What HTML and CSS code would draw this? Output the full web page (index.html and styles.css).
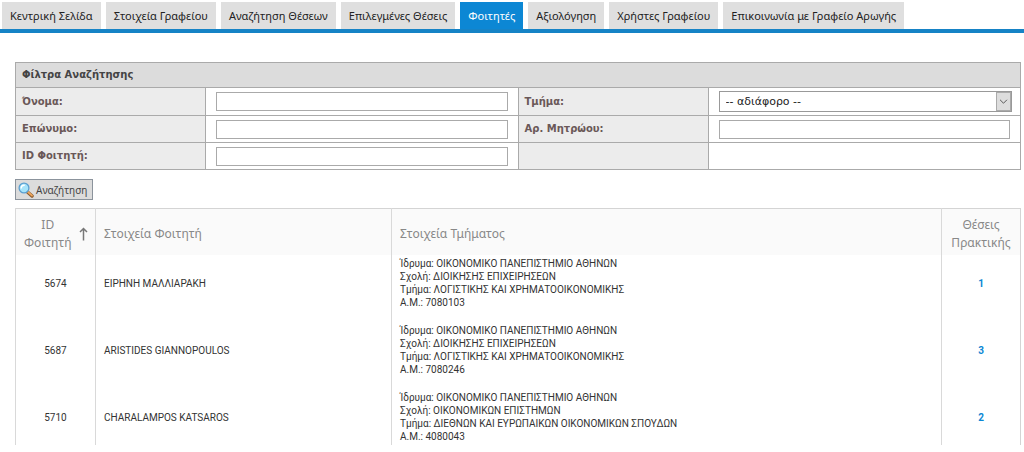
FILE: index.html
```html
<!DOCTYPE html>
<html lang="el">
<head>
<meta charset="utf-8">
<title>Φοιτητές</title>
<link rel="stylesheet" href="styles.css">
</head>
<body>
<nav class="tabs">
  <a class="tab" href="#">Κεντρική Σελίδα</a>
  <a class="tab" href="#">Στοιχεία Γραφείου</a>
  <a class="tab" href="#">Αναζήτηση Θέσεων</a>
  <a class="tab" href="#">Επιλεγμένες Θέσεις</a>
  <a class="tab active" href="#">Φοιτητές</a>
  <a class="tab" href="#">Αξιολόγηση</a>
  <a class="tab" href="#">Χρήστες Γραφείου</a>
  <a class="tab" href="#">Επικοινωνία με Γραφείο Αρωγής</a>
</nav>
<main class="content">
  <form>
    <table class="filters">
      <colgroup><col class="c-label"><col class="c-field"><col class="c-label"><col class="c-field"></colgroup>
      <thead><tr><th colspan="4">Φίλτρα Αναζήτησης</th></tr></thead>
      <tbody>
        <tr>
          <th><label for="first">Όνομα:</label></th>
          <td><input class="text" type="text" id="first"></td>
          <th><label for="dept">Τμήμα:</label></th>
          <td>
            <div class="select-box">
              <select id="dept"><option>-- αδιάφορο --</option></select>
              <svg class="caret" viewBox="0 0 15 19" aria-hidden="true"><path d="M3.500 7.500l4 4 4-4"/></svg>
            </div>
          </td>
        </tr>
        <tr>
          <th><label for="last">Επώνυμο:</label></th>
          <td><input class="text" type="text" id="last"></td>
          <th><label for="reg">Αρ. Μητρώου:</label></th>
          <td><input class="text" type="text" id="reg"></td>
        </tr>
        <tr>
          <th><label for="sid">ID Φοιτητή:</label></th>
          <td><input class="text" type="text" id="sid"></td>
          <th></th>
          <td></td>
        </tr>
      </tbody>
    </table>
    <button class="search" type="button">
      <svg class="glass" viewBox="0 0 16 16" aria-hidden="true">
        <path d="M9.500 10l4.500 4" stroke="#8a5a2c" stroke-width="3.400" stroke-linecap="round"/>
        <path d="M10 10l4 3.600" stroke="#f0a860" stroke-width="1.800" stroke-linecap="round"/>
        <circle cx="6" cy="6" r="4.900" fill="#a5e3fa" stroke="#5b9fd0" stroke-width="1.300"/>
        <path d="M3.200 6a3 3 0 0 1 3-2.800" fill="none" stroke="#fff" stroke-width="1.400" stroke-linecap="round"/>
      </svg>
      Αναζήτηση
    </button>
  </form>
  <table class="grid">
    <colgroup><col class="g-id"><col class="g-name"><col class="g-dept"><col class="g-count"></colgroup>
    <thead>
      <tr>
        <th class="mid"><div class="sort"><span>ID Φοιτητή</span><svg class="arrow" viewBox="0 0 9 14" aria-hidden="true"><path d="M4.500 13.500V1.500M1 5l3.500-3.500L8 5"/></svg></div></th>
        <th>Στοιχεία Φοιτητή</th>
        <th>Στοιχεία Τμήματος</th>
        <th class="mid">Θέσεις Πρακτικής</th>
      </tr>
    </thead>
    <tbody>
      <tr>
        <td class="mid">5674</td>
        <td>ΕΙΡΗΝΗ ΜΑΛΛΙΑΡΑΚΗ</td>
        <td>Ίδρυμα: ΟΙΚΟΝΟΜΙΚΟ ΠΑΝΕΠΙΣΤΗΜΙΟ ΑΘΗΝΩΝ<br>Σχολή: ΔΙΟΙΚΗΣΗΣ ΕΠΙΧΕΙΡΗΣΕΩΝ<br>Τμήμα: ΛΟΓΙΣΤΙΚΗΣ ΚΑΙ ΧΡΗΜΑΤΟΟΙΚΟΝΟΜΙΚΗΣ<br>Α.Μ.: 7080103</td>
        <td class="mid"><a class="count" href="#">1</a></td>
      </tr>
      <tr>
        <td class="mid">5687</td>
        <td>ARISTIDES GIANNOPOULOS</td>
        <td>Ίδρυμα: ΟΙΚΟΝΟΜΙΚΟ ΠΑΝΕΠΙΣΤΗΜΙΟ ΑΘΗΝΩΝ<br>Σχολή: ΔΙΟΙΚΗΣΗΣ ΕΠΙΧΕΙΡΗΣΕΩΝ<br>Τμήμα: ΛΟΓΙΣΤΙΚΗΣ ΚΑΙ ΧΡΗΜΑΤΟΟΙΚΟΝΟΜΙΚΗΣ<br>Α.Μ.: 7080246</td>
        <td class="mid"><a class="count" href="#">3</a></td>
      </tr>
      <tr>
        <td class="mid">5710</td>
        <td>CHARALAMPOS KATSAROS</td>
        <td>Ίδρυμα: ΟΙΚΟΝΟΜΙΚΟ ΠΑΝΕΠΙΣΤΗΜΙΟ ΑΘΗΝΩΝ<br>Σχολή: ΟΙΚΟΝΟΜΙΚΩΝ ΕΠΙΣΤΗΜΩΝ<br>Τμήμα: ΔΙΕΘΝΩΝ ΚΑΙ ΕΥΡΩΠΑΙΚΩΝ ΟΙΚΟΝΟΜΙΚΩΝ ΣΠΟΥΔΩΝ<br>Α.Μ.: 4080043</td>
        <td class="mid"><a class="count" href="#">2</a></td>
      </tr>
    </tbody>
  </table>
</main>
</body>
</html>
```
FILE: styles.css
```css
* { box-sizing: border-box; }
body { margin: 0; background: #fff; color: #333; font-family: "Noto Sans", "Open Sans", sans-serif; }
table { border-collapse: collapse; width: 100%; table-layout: fixed; }

.tabs { display: flex; gap: 5px; padding: 2px 2px 0; border-bottom: 4px solid #1683c6; font: 11px/27px "Noto Sans", sans-serif; }
.tab { padding: 0 8px; background: #dfdfdf; color: #222; text-decoration: none; white-space: nowrap; }
.tab.active { background: #0c87d4; color: #fff; }

.content { padding: 29px 3px 0 15px; }

.filters { font: bold 10px/14px "DejaVu Sans", sans-serif; color: #6a5858; }
.filters th, .filters td { height: 27px; border: 1px solid #aaa; text-align: left; }
.filters th { padding: 0 6px; background: #ececec; }
.filters thead th { height: 25px; background: #dcdcdc; color: #444; }
.filters td { padding: 0 8px 0 10px; }
.c-label { width: 190px; }
.text { display: block; width: calc(100% - 2px); height: 19px; padding: 0 6px; border: 1px solid #aaa; background: #fff; }
.select-box { position: relative; }
.select-box select { display: block; appearance: none; width: 100%; height: 21px; margin: 3px 0; padding: 0 22px 0 6px; border: 1px solid #999; border-radius: 0; background: #fff; color: #222; font: 11px "DejaVu Sans", sans-serif; }
.caret { position: absolute; top: 1px; right: 1px; width: 15px; height: 19px; background: #ddd; border: 1px solid #aaa; fill: none; stroke: #444; pointer-events: none; }

.search { display: flex; align-items: center; gap: 2px; height: 21px; margin: 9px 0 8px; padding: 0 5px 0 2px; border: 1px solid #8b939c; background: #dcdcdc; color: #444; font: 10px "Noto Sans", sans-serif; }
.glass { width: 16px; height: 16px; fill: none; }

.grid { border: 1px solid #d4d4d4; border-bottom: 0; font: 10px/13px Roboto, sans-serif; }
.grid th, .grid td { border-left: 1px solid #d9d9d9; text-align: left; vertical-align: middle; }
.grid th { height: 46px; padding: 7px 8px 3px; background: #fafafa; color: #888; font: 12px/18px "Noto Sans", sans-serif; }
.grid td { padding: 2px 8px 13px; }
.grid tbody tr:last-child td { padding-bottom: 2px; }
.grid .mid { text-align: center; }
.g-id { width: 80px; }
.g-name { width: 296px; }
.g-count { width: 79px; }
.sort { display: flex; align-items: center; gap: 8px; }
.arrow { flex: none; width: 9px; height: 14px; fill: none; stroke: #777; stroke-width: 1.500; }
.count { color: #0c87d4; font-weight: bold; text-decoration: none; }
```
